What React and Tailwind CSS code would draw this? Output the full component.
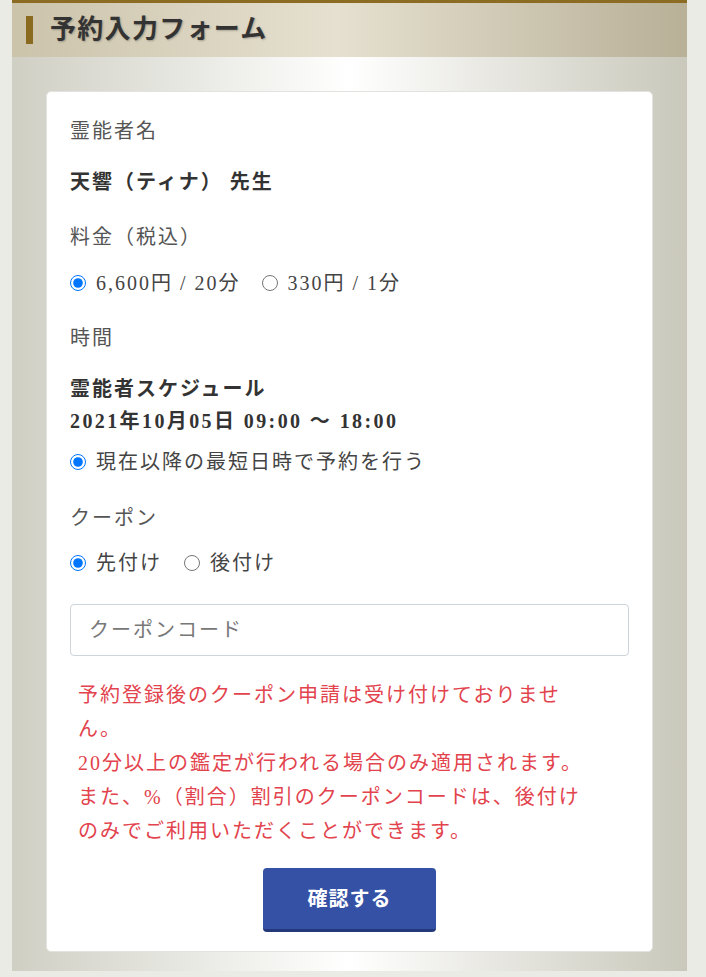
import React, { useState } from 'react'

const serif = "font-['Liberation_Serif','Noto_Sans_CJK_JP',serif]"

function Radio({ name, checked, onChange, label, className = '' }) {
  return (
    <label className={`flex items-center ${className}`}>
      <input
        type="radio"
        name={name}
        checked={checked}
        onChange={onChange}
        className="m-0 h-[16px] w-[16px] shrink-0"
      />
      <span className="ml-[10px]">{label}</span>
    </label>
  )
}

export default function App() {
  const [price, setPrice] = useState('20')
  const [coupon, setCoupon] = useState('pre')

  return (
    <div className={`min-h-screen bg-[#ebebe6] pl-[12px] pr-[19px] ${serif}`}>
      <div className="border-t-[3px] border-[#8b6c22]">
        <div className="flex h-[54px] items-center bg-[linear-gradient(90deg,#cbc3aa_0%,#e6e0d0_48%,#b8b097_100%)] pl-[14px]">
          <span className="h-[28px] w-[7px] bg-[#8a6a1e]" />
          <h1 className="ml-[17px] text-[26px] font-bold leading-none tracking-[0.05em] text-[#333] [text-shadow:1px_1px_2px_rgba(0,0,0,0.25)]">
            予約入力フォーム
          </h1>
        </div>

        <div className="bg-[linear-gradient(90deg,#cfcfc4_0%,#ffffff_50%,#c9c8bb_100%)] px-[34px] pb-[19px] pt-[34px]">
          <form
            onSubmit={(e) => e.preventDefault()}
            className="rounded-[5px] border border-[#e2e2de] bg-white px-[23px] pb-[19px] pt-[23px] text-[20px] leading-[32px] tracking-[0.1em] text-[#444]"
          >
            <div className="text-[#555]">霊能者名</div>
            <div className="mt-[19px] font-bold text-[#333]">天響（ティナ） 先生</div>

            <div className="mt-[23px] text-[#555]">料金（税込）</div>
            <div className="mt-[14px] flex">
              <Radio name="price" checked={price === '20'} onChange={() => setPrice('20')} label="6,600円 / 20分" />
              <Radio name="price" checked={price === '1'} onChange={() => setPrice('1')} label="330円 / 1分" className="ml-[21px]" />
            </div>

            <div className="mt-[23px] text-[#555]">時間</div>
            <div className="mt-[19px] font-bold text-[#333]">
              <div>霊能者スケジュール</div>
              <div className="tracking-[0.12em]">2021年10月05日 09:00 ～ 18:00</div>
            </div>
            <div className="mt-[9px] flex">
              <Radio name="time" checked onChange={() => {}} label="現在以降の最短日時で予約を行う" />
            </div>

            <div className="mt-[24px] text-[#555]">クーポン</div>
            <div className="mt-[13px] flex">
              <Radio name="coupon" checked={coupon === 'pre'} onChange={() => setCoupon('pre')} label="先付け" />
              <Radio name="coupon" checked={coupon === 'post'} onChange={() => setCoupon('post')} label="後付け" className="ml-[22px]" />
            </div>

            <input
              type="text"
              placeholder="クーポンコード"
              className="mt-[25px] block h-[52px] w-full rounded-[4px] border border-[#ced4da] px-[18px] text-[20px] tracking-[0.1em] text-[#444] outline-none placeholder:text-[#777]"
            />

            <p className="ml-[8px] mt-[22px] w-[514px] text-[20px] leading-[34px] text-[#e2434d]">
              予約登録後のクーポン申請は受け付けておりません。
              <br />
              20分以上の鑑定が行われる場合のみ適用されます。
              <br />
              また、%（割合）割引のクーポンコードは、後付けのみでご利用いただくことができます。
            </p>

            <div className="mt-[20px] flex justify-center">
              <button
                type="submit"
                className="h-[64px] w-[173px] rounded-[4px] border-b-[3px] border-[#24397a] bg-[#3551a5] text-[20px] font-bold tracking-[0.05em] text-white"
              >
                確認する
              </button>
            </div>
          </form>
        </div>
      </div>
    </div>
  )
}
